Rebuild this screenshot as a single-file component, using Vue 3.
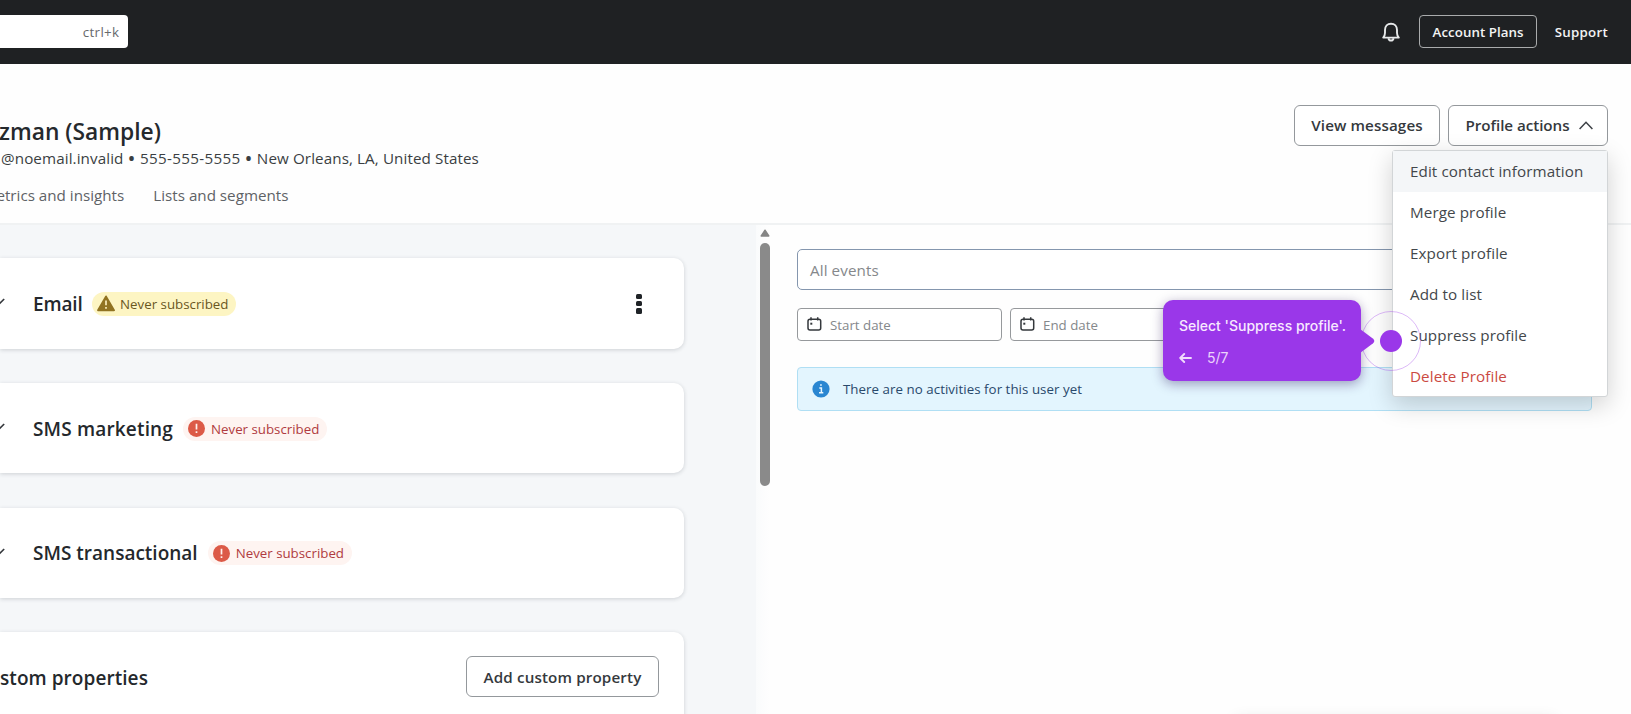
<script setup>
const cards = [
  { title: 'Email', tone: 'warn', fit: 'tight' },
  { title: 'SMS marketing', tone: 'bad', fit: 'loose' },
  { title: 'SMS transactional', tone: 'bad', fit: '' },
]
const menu = ['Edit contact information', 'Merge profile', 'Export profile', 'Add to list', 'Suppress profile', 'Delete Profile']
const dates = ['Start date', 'End date']
</script>

<template>
  <div class="page">
    <header class="topbar">
      <div class="search">ctrl+k</div>
      <nav class="top-actions">
        <svg class="bell" width="18" height="20" viewBox="0 0 18 20" fill="none" stroke="#e6e8e9" stroke-width="1.9" stroke-linejoin="round">
          <path d="M1.200 15.600C2.500 14.300 3 13 3 10.800V8C3 4.200 5.400 1.700 9 1.700S15 4.200 15 8v2.800c0 2.200.5 3.500 1.800 4.800z" />
          <path d="M6.400 16.200c.3 1.600 1.200 2.300 2.600 2.300s2.300-.7 2.600-2.300" />
        </svg>
        <button class="plans">Account Plans</button>
        <a class="support">Support</a>
      </nav>
    </header>

    <section class="profile">
      <div class="who">
        <h1>zman (Sample)</h1>
        <p class="contact">
          <span>@noemail.invalid</span><b>•</b><span class="phone">555-555-5555</span><b>•</b><span>New Orleans, LA, United States</span>
        </p>
        <div class="tabs"><span>etrics and insights</span><span>Lists and segments</span></div>
      </div>
      <div class="profile-buttons">
        <button class="btn view">View messages</button>
        <button class="btn actions">
          <span>Profile actions</span>
          <svg width="14" height="9" viewBox="0 0 14 9" fill="none" stroke="#3d4146" stroke-width="1.500"><path d="M.6 7.900 7 1.300l6.400 6.600" /></svg>
        </button>
        <ul class="menu">
          <li v-for="(m, i) in menu" :key="m" :class="{ hover: i === 0, danger: i === 5 }">{{ m }}</li>
        </ul>
      </div>
    </section>

    <main class="body">
      <div class="left">
        <article v-for="c in cards" :key="c.title" class="card">
          <svg class="chev" width="5" height="8" viewBox="0 0 5 8" fill="none" stroke="#33373b" stroke-width="1.600"><path d="M-2 7.200 4.200 1" /></svg>
          <h2 :class="c.fit">{{ c.title }}</h2>
          <span class="pill" :class="c.tone">
            <svg v-if="c.tone === 'warn'" width="18" height="17" viewBox="0 0 18 17"><path d="M9 1.400 17 15.300H1z" fill="#917321" stroke="#917321" stroke-width="1.800" stroke-linejoin="round" /><path d="M9 5.500v4.700M9 12v1.800" stroke="#fff3c4" stroke-width="1.600" /></svg>
            <svg v-else width="17" height="17" viewBox="0 0 17 17"><circle cx="8.500" cy="8.500" r="8.500" fill="#dc5a47" /><path d="M8.500 3.800v5.700M8.500 11.200v1.900" stroke="#fff0ec" stroke-width="1.700" /></svg>
            <span>Never subscribed</span>
          </span>
          <span v-if="c.tone === 'warn'" class="kebab"><i /><i /><i /></span>
        </article>
        <article class="card custom">
          <h2>stom properties</h2>
          <button class="btn add">Add custom property</button>
        </article>
      </div>
      <div class="scroll">
        <svg width="10" height="8" viewBox="0 0 10 8"><path d="M5 1.200 8.800 7H1.200z" fill="#858585" stroke="#858585" stroke-width="1.400" stroke-linejoin="round" /></svg>
        <div class="thumb" />
      </div>
      <div class="right">
        <div class="events">All events</div>
        <div class="dates">
          <div v-for="d in dates" :key="d" class="date">
            <svg width="15" height="14" viewBox="0 0 15 14" fill="none" stroke="#34383c" stroke-width="1.500"><rect x="1" y="2.300" width="12.700" height="10.700" rx="2" /><path d="M4 .2v3.400M10.700.2v3.400" /><path d="M3.300 6.700h2" stroke-width="2" /></svg>
            <span>{{ d }}</span>
          </div>
        </div>
        <div class="banner">
          <svg width="18" height="18" viewBox="0 0 18 18"><circle cx="9" cy="9" r="8.600" fill="#2a86d1" /><path d="M7.300 7.900h2.100v4.700M7 12.700h4.300M8.100 5h1.700" fill="none" stroke="#e8f6ff" stroke-width="1.500" /></svg>
          <span>There are no activities for this user yet</span>
        </div>
      </div>
    </main>
    <div class="bottom-shadow" />
    <div class="ring" />
    <aside class="tip">
      <p>Select 'Suppress profile'.</p>
      <div class="step">
        <svg width="13" height="12" viewBox="0 0 13 12" fill="none" stroke="#f0dcfc" stroke-width="1.900" stroke-linecap="round" stroke-linejoin="round"><path d="M12 6H1.200M5.200 2 1.200 6l4 4" /></svg>
        <span>5/7</span>
      </div>
      <svg class="tail" width="15" height="24" viewBox="0 0 15 24"><path d="M0 0 12.800 9.400q3 2.600 0 5.200L0 24z" fill="#9a37e9" /></svg>
    </aside>
  </div>
</template>

<style>
html, body { margin: 0; background: #fff; overflow: hidden; }
</style>

<style scoped>
* { box-sizing: border-box; }
.page { position: relative; width: 1631px; height: 714px; overflow: hidden; background: #fefefe; color: #3a3e42; font: 400 15.200px/20px "Open Sans", "Noto Sans", sans-serif; display: flex; flex-direction: column; white-space: nowrap; }
h1, h2, p, ul { margin: 0; padding: 0; }
button { font: inherit; color: inherit; letter-spacing: inherit; background: none; padding: 0; white-space: nowrap; }
svg { flex: none; display: block; }
.topbar { height: 64px; flex: none; background: #1f2123; display: flex; justify-content: space-between; align-items: flex-start; padding-top: 15px; }
.search { width: 128px; height: 33px; background: #fff; border-radius: 0 4px 4px 0; display: flex; align-items: center; justify-content: flex-end; padding-right: 8.600px; color: #67696c; font-size: 13.300px; letter-spacing: .35px; }
.top-actions { display: flex; align-items: center; height: 33px; padding-right: 23px; color: #f3f4f4; font-size: 13.300px; font-weight: 600; }
.bell { margin-right: 19px; }
.plans { width: 118px; height: 33px; border: 1px solid #a9abac; border-radius: 4px; margin-right: 17.600px; letter-spacing: .06px; }
.support { letter-spacing: .27px; }
.profile { flex: none; height: 161px; display: flex; justify-content: space-between; border-bottom: 2px solid #f0f2f3; }
.who { padding-top: 52px; }
h1 { font-size: 22.800px; line-height: 32px; font-weight: 600; color: #25292d; margin-left: -1px; }
.contact { margin-left: 1px; display: flex; letter-spacing: .1px; }
.contact b { width: 16.400px; display: flex; justify-content: center; font-weight: 700; font-size: 16px; }
.contact .phone { letter-spacing: .33px; }
.tabs { display: flex; gap: 29px; margin: 17px 0 0 -3.600px; color: #5e6266; }
.profile-buttons { position: relative; display: flex; gap: 8px; padding: 41px 23px 0 0; }
.btn { height: 41px; border: 1px solid #94989c; border-radius: 6px; background: #fff; font-weight: 600; display: flex; align-items: center; justify-content: center; color: #35393d; padding-bottom: 1px; letter-spacing: .1px; }
.view { width: 146px; }
.actions { width: 160px; gap: 10px; letter-spacing: -.05px; padding-left: 3px; }
.menu { position: absolute; z-index: 3; right: 23px; top: 86px; width: 216px; height: 247px; list-style: none; background: #fff; border: 1px solid #d2d5d7; border-radius: 3px; box-shadow: 0 8px 24px rgba(0, 0, 0, .18); letter-spacing: .1px; }
.menu li { height: 40.900px; padding: 0 0 .6px 17px; display: flex; align-items: center; color: #43474b; }
.menu .hover { background: #f4f6f8; }
.menu .danger { color: #cb4942; }
.body { flex: 1; display: flex; min-height: 0; }
.left { width: 756px; background: #f5f7f9; padding-top: 33px; display: flex; flex-direction: column; gap: 34.300px; flex: none; }
.card { width: 684px; height: 90.500px; flex: none; background: #fff; border-radius: 0 10px 10px 0; box-shadow: 0 1px 4px rgba(30, 40, 50, .18); display: flex; align-items: center; padding: 1px 25px 0 0; }
.chev { margin: -3px 28px 0 0; }
h2 { font-size: 19px; line-height: 26px; font-weight: 600; color: #24282c; }
.tight { letter-spacing: -.15px; }
.loose { letter-spacing: .16px; }
.pill { height: 24px; border-radius: 12px; padding: 0 8px 0 5px; display: flex; align-items: center; font-size: 13.300px; }
.warn { margin-left: 9px; gap: 5.500px; background: #fdf5c3; color: #6a571f; }
.bad { margin-left: 10px; gap: 6px; background: #fef4f1; color: #b03b40; }
.kebab { margin-left: auto; margin-right: 17.500px; display: grid; gap: 2px; }
.kebab i { width: 5.500px; height: 5.300px; background: #1f2327; border-radius: 1.500px; }
.custom { justify-content: space-between; height: 120px; align-items: flex-start; padding-top: 24px; }
.custom h2 { line-height: 45px; letter-spacing: .06px; }
.add { width: 193px; letter-spacing: .13px; padding-bottom: 0; }
.scroll { width: 14px; padding: 4px 0 0 4px; flex: none; background: linear-gradient(90deg, #fafbfc, #fefefe); }
.thumb { width: 10px; height: 243px; border-radius: 5px; background: #8a8a8a; margin-top: 6px; }
.right { width: 822px; padding: 24px 0 0 27px; color: #85888b; }
.events { width: 795px; height: 41px; border: 1px solid #8496ae; border-radius: 5px; padding: 0 0 0 12px; display: flex; align-items: center; background: #fff; letter-spacing: .1px; }
.dates { display: flex; gap: 8px; margin-top: 18px; font-size: 13.300px; }
.date { width: 205px; height: 33px; border: 1px solid #96999c; border-radius: 4px; display: flex; align-items: center; padding: 1px 0 0 9px; gap: 8px; background: #fff; }
.date svg { margin-top: -2px; }
.banner { margin-top: 26px; height: 44px; border: 1px solid #b0dff4; border-radius: 4px; background: #e3f5fe; display: flex; align-items: center; padding-left: 14px; gap: 13px; color: #29496c; font-size: 13.300px; letter-spacing: .05px; }
.bottom-shadow { position: absolute; left: 1235px; top: 720px; width: 320px; height: 40px; box-shadow: 0 0 16px rgba(0, 0, 0, .12); }
.ring { position: absolute; z-index: 4; left: 1361px; top: 311px; width: 60px; height: 60px; border: 1px solid rgba(154, 55, 233, .35); border-radius: 50%; display: flex; }
.ring::before { content: ''; margin: auto; width: 22px; height: 22px; border-radius: 50%; background: #9a37e9; }
.tip { position: absolute; z-index: 5; left: 1163px; top: 300px; width: 198px; height: 81px; padding: 16px; border-radius: 10px; background: #9a37e9; box-shadow: 0 3px 12px rgba(40, 20, 90, .4); color: #f7e9ff; font: 500 14px/20px Inter, sans-serif; }
.step { display: flex; align-items: center; gap: 15px; margin-top: 12px; font-weight: 400; color: #ecd3fb; }
.tail { position: absolute; left: 197px; top: 29px; }
</style>
